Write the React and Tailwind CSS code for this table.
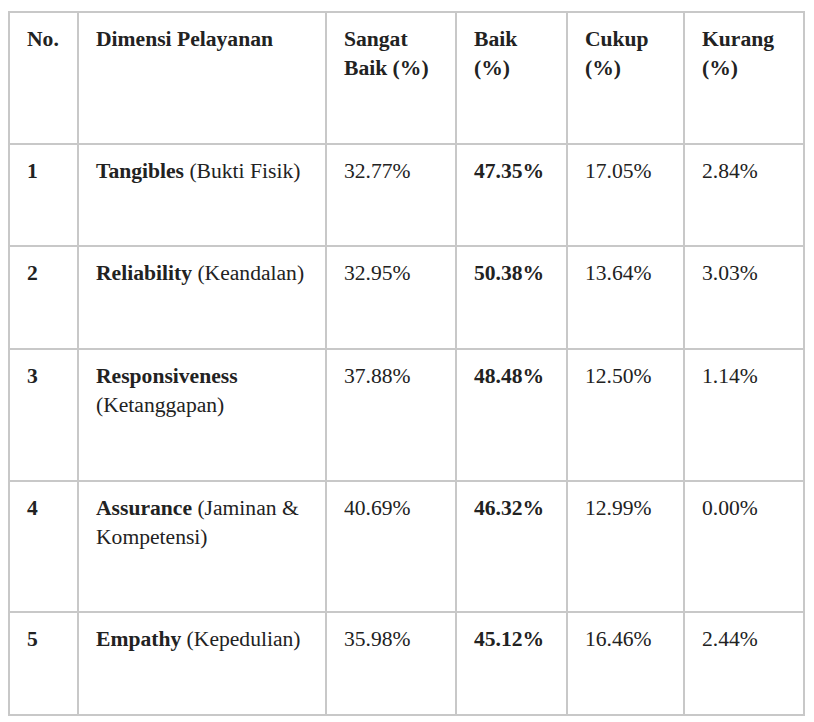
import React from "react";

const rows = [
  { no: "1", b: "Tangibles", r: " (Bukti Fisik)", sb: "32.77%", baik: "47.35%", c: "17.05%", k: "2.84%" },
  { no: "2", b: "Reliability", r: " (Keandalan)", sb: "32.95%", baik: "50.38%", c: "13.64%", k: "3.03%" },
  { no: "3", b: "Responsiveness", r: " (Ketanggapan)", sb: "37.88%", baik: "48.48%", c: "12.50%", k: "1.14%" },
  { no: "4", b: "Assurance", r: " (Jaminan & Kompetensi)", sb: "40.69%", baik: "46.32%", c: "12.99%", k: "0.00%" },
  { no: "5", b: "Empathy", r: " (Kepedulian)", sb: "35.98%", baik: "45.12%", c: "16.46%", k: "2.44%" },
];

const cell =
  "font-['Liberation_Serif'] border-2 border-[#c8c8c8] align-top text-left pl-[17px] pr-[11px] pt-[12px] pb-[60px]";

export default function App() {
  return (
    <div className="bg-white min-h-[722px] pt-[11px] pl-[8px] font-['Liberation_Serif']">
      <table className="font-['Liberation_Serif'] border-collapse table-fixed w-[795px] text-[21.6px] leading-[28.8px] text-[#222]">
        <colgroup>
          <col className="w-[69px]" />
          <col className="w-[248px]" />
          <col className="w-[130px]" />
          <col className="w-[111px]" />
          <col className="w-[117px]" />
          <col className="w-[120px]" />
        </colgroup>
        <thead>
          <tr>
            <th className={cell + " font-bold"}>No.</th>
            <th className={cell + " font-bold"}>Dimensi Pelayanan</th>
            <th className={cell + " font-bold"}>Sangat Baik (%)</th>
            <th className={cell + " font-bold"}>Baik (%)</th>
            <th className={cell + " font-bold"}>Cukup (%)</th>
            <th className={cell + " font-bold"}>Kurang (%)</th>
          </tr>
        </thead>
        <tbody>
          {rows.map((row) => (
            <tr key={row.no}>
              <td className={cell + " font-bold"}>{row.no}</td>
              <td className={cell}>
                <strong className="font-bold">{row.b}</strong>
                {row.r}
              </td>
              <td className={cell}>{row.sb}</td>
              <td className={cell + " font-bold"}>{row.baik}</td>
              <td className={cell}>{row.c}</td>
              <td className={cell}>{row.k}</td>
            </tr>
          ))}
        </tbody>
      </table>
    </div>
  );
}
